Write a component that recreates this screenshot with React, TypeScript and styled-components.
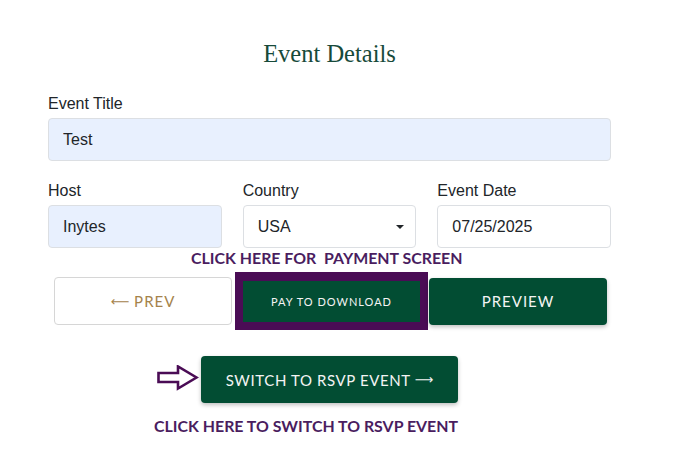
import React from "react";
import styled, { createGlobalStyle } from "styled-components";

const Global = createGlobalStyle`
  html, body { margin: 0; padding: 0; background: #ffffff; }
  body { font-family: "Liberation Sans", Arial, sans-serif; color: #212529; }
  * { box-sizing: border-box; }
`;

const Page = styled.div`
  width: 675px;
  padding: 39px 64px 0 48px;
`;

const Title = styled.h2`
  margin: 0 0 25px;
  text-align: center;
  font-family: "Liberation Serif", "Times New Roman", serif;
  font-weight: 400;
  font-size: 24.5px;
  line-height: 30px;
  color: #174a3a;
`;

const Field = styled.div`
  display: flex;
  flex-direction: column;
  gap: 5px;
`;

const Label = styled.label`
  font-size: 16px;
  line-height: 19px;
  color: #212529;
`;

const Input = styled.input<{ $filled?: boolean }>`
  height: 43px;
  width: 100%;
  padding: 0 14px;
  border: 1px solid #dcdfe3;
  border-radius: 4px;
  background: ${(p) => (p.$filled ? "#e8f0fe" : "#ffffff")};
  font-family: "Liberation Sans", Arial, sans-serif;
  font-size: 16px;
  color: #212529;
  outline: none;
`;

const Row = styled.div`
  display: grid;
  grid-template-columns: repeat(3, 1fr);
  gap: 21px;
  margin-top: 20px;
`;

const SelectWrap = styled.div`
  position: relative;
`;

const Caret = styled.span`
  position: absolute;
  right: 12px;
  top: 20px;
  width: 0;
  height: 0;
  border-left: 4px solid transparent;
  border-right: 4px solid transparent;
  border-top: 4px solid #212529;
`;

const Note = styled.div<{ $indent: number }>`
  padding-left: ${(p) => p.$indent}px;
  font-family: Lato, "Open Sans", sans-serif;
  font-weight: 700;
  font-size: 15.9px;
  line-height: 20px;
  color: #4a1d5f;
  white-space: pre;
`;

const ButtonRow = styled.div`
  display: flex;
  align-items: center;
  margin: 4px 4px 0 6px;
`;

const BaseButton = styled.button`
  font-family: Lato, "Open Sans", sans-serif;
  text-transform: uppercase;
  cursor: pointer;
  display: flex;
  align-items: center;
  justify-content: center;
  gap: 0;
`;

const Arrow = styled.span`
  font-family: "DejaVu Sans", sans-serif;
  font-size: 13px;
  letter-spacing: 0;
`;

const PrevButton = styled(BaseButton)`
  width: 178px;
  height: 48px;
  background: #ffffff;
  border: 1px solid #d6d6d6;
  border-radius: 4px;
  color: #a5834b;
  font-size: 15px;
  letter-spacing: 1px;
`;

const Highlight = styled.div`
  width: 193px;
  height: 58px;
  margin: 0 1px 0 3px;
  border: 8px solid #4a0c55;
  border-top-width: 9px;
  display: flex;
`;

const PayButton = styled(BaseButton)`
  flex: 1;
  border: none;
  background: #024d33;
  color: #f4f4f4;
  font-size: 11px;
  letter-spacing: 1px;
`;

const GreenButton = styled(BaseButton)<{ $w: number; $ls: number }>`
  width: ${(p) => p.$w}px;
  height: 47px;
  border: none;
  border-radius: 4px;
  background: #024d33;
  color: #f4f4f4;
  font-size: 15px;
  letter-spacing: ${(p) => p.$ls}px;
  box-shadow: 0 2px 4px rgba(0, 0, 0, 0.25);
`;

const SwitchArea = styled.div`
  display: flex;
  justify-content: center;
  margin-top: 26px;
`;

const SwitchWrap = styled.div`
  position: relative;
`;

const PointerArrow = styled.svg`
  position: absolute;
  left: -44px;
  top: 9px;
`;

const BottomNote = styled(Note)`
  margin-top: 13px;
`;

export default function App() {
  return (
    <Page>
      <Global />
      <Title>Event Details</Title>
      <Field>
        <Label>Event Title</Label>
        <Input $filled defaultValue="Test" readOnly />
      </Field>
      <Row>
        <Field>
          <Label>Host</Label>
          <Input $filled defaultValue="Inytes" readOnly />
        </Field>
        <Field>
          <Label>Country</Label>
          <SelectWrap>
            <Input defaultValue="USA" readOnly />
            <Caret />
          </SelectWrap>
        </Field>
        <Field>
          <Label>Event Date</Label>
          <Input defaultValue="07/25/2025" readOnly />
        </Field>
      </Row>
      <Note $indent={143}>{"CLICK HERE FOR  PAYMENT SCREEN"}</Note>
      <ButtonRow>
        <PrevButton>
          <Arrow>⟵</Arrow>&nbsp;PREV
        </PrevButton>
        <Highlight>
          <PayButton>Pay to Download</PayButton>
        </Highlight>
        <GreenButton $w={178} $ls={1}>Preview</GreenButton>
      </ButtonRow>
      <SwitchArea>
        <SwitchWrap>
          <PointerArrow width="42" height="26" viewBox="0 0 42 26">
            <path
              d="M1.5 8 H21 V1.5 L39.5 12.5 L21 23.5 V17 H1.5 Z"
              fill="none"
              stroke="#4a0c55"
              strokeWidth="2.6"
              strokeLinejoin="miter"
            />
          </PointerArrow>
          <GreenButton $w={257} $ls={0.6}>
            Switch to RSVP Event&nbsp;<Arrow>⟶</Arrow>
          </GreenButton>
        </SwitchWrap>
      </SwitchArea>
      <BottomNote $indent={106}>CLICK HERE TO SWITCH TO RSVP EVENT</BottomNote>
    </Page>
  );
}
